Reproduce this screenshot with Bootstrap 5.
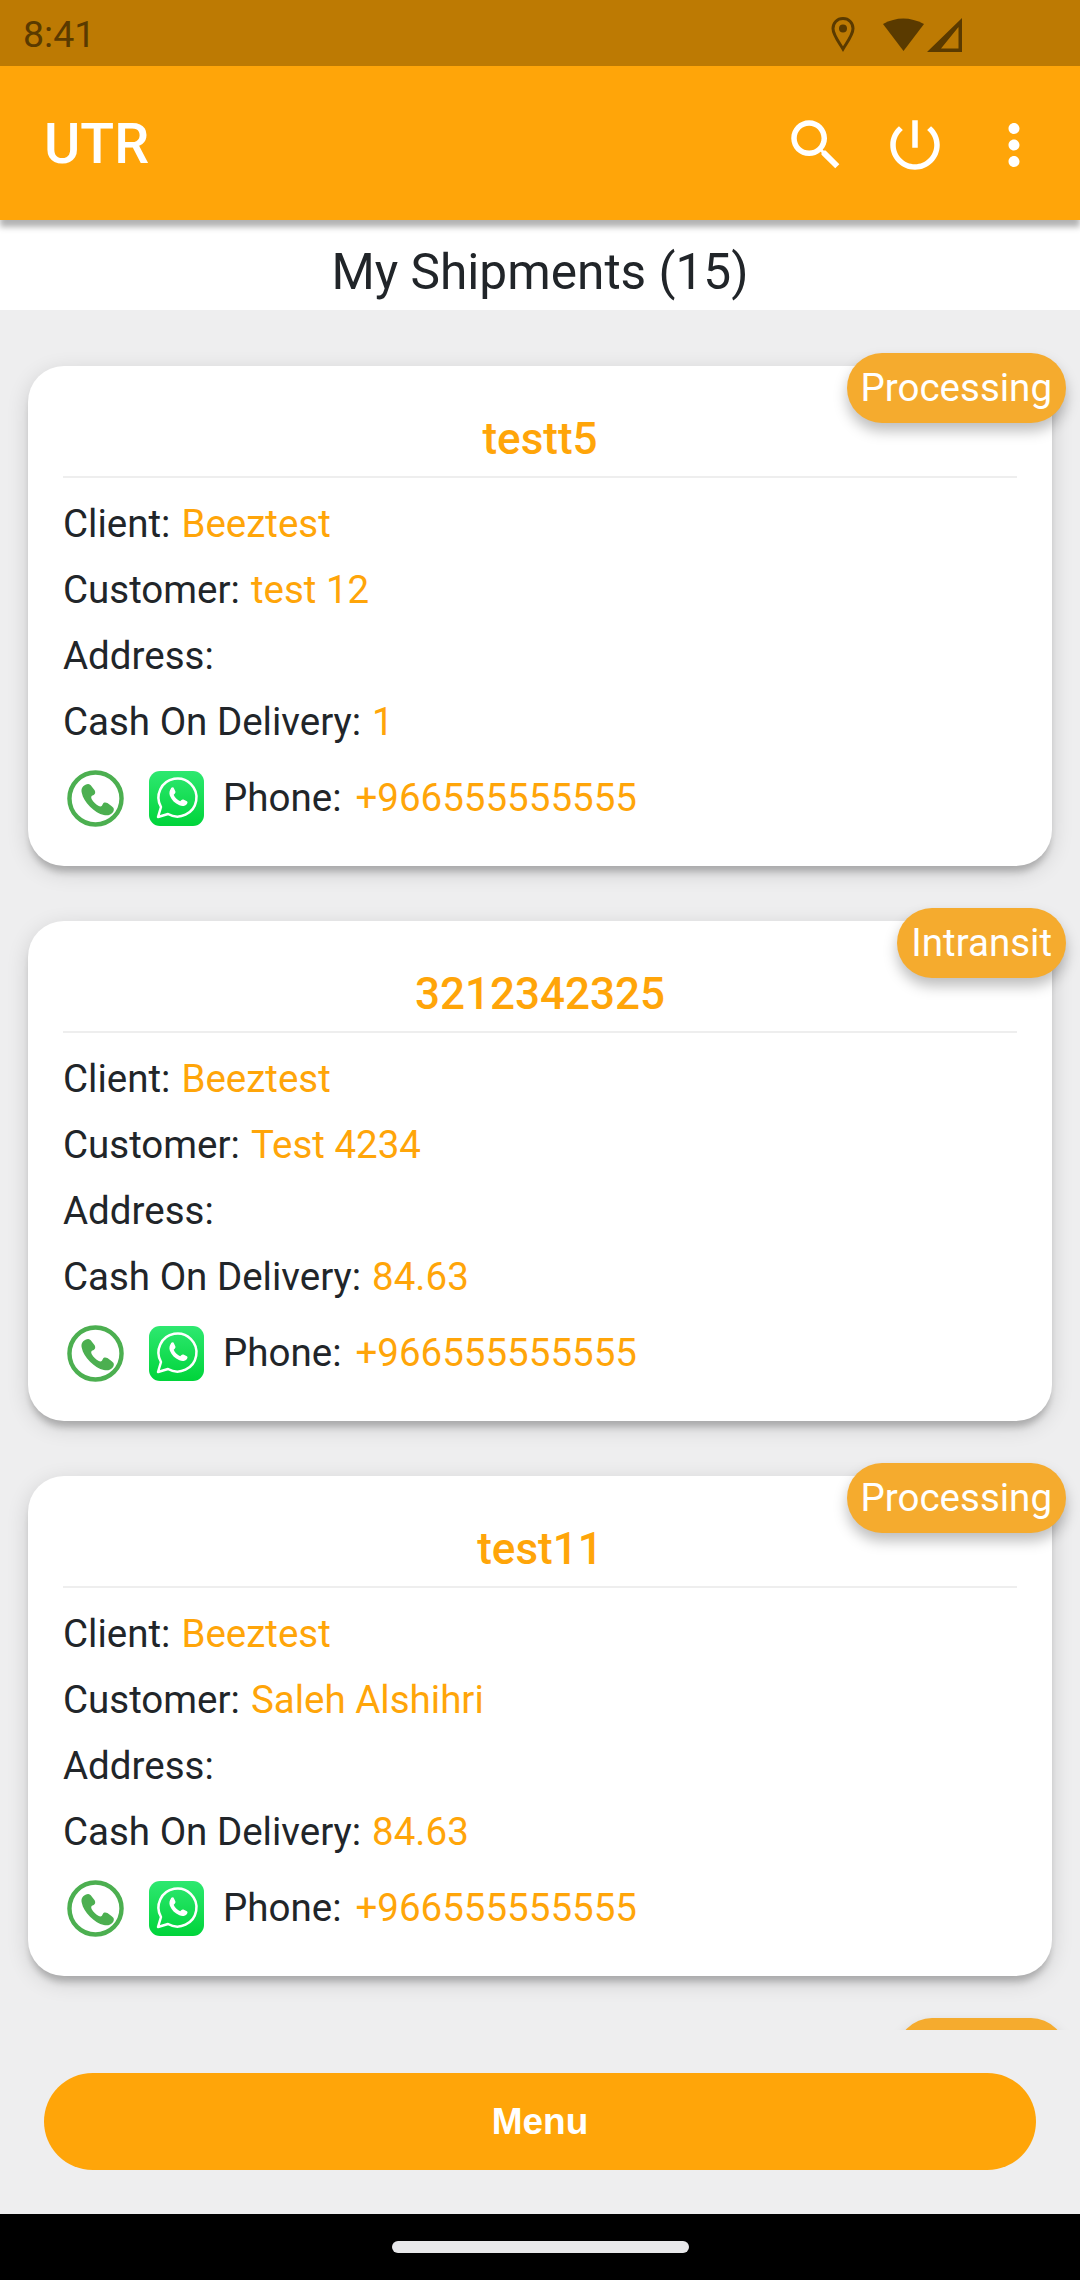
<!DOCTYPE html>
<html lang="en">
<head>
    <meta charset="UTF-8">
    <title>My Shipments - UTR</title>
    <meta name="viewport" content="width=device-width, initial-scale=1">
    <link href="https://cdn.jsdelivr.net/npm/bootstrap@5.3.3/dist/css/bootstrap.min.css" rel="stylesheet">
    <style>
        html, body { height: 100%; }
        body { font-family: Roboto, "Liberation Sans", sans-serif; background: #eeeeef; color: #212529; overflow: hidden; }
        .app-screen { height: 2280px; }
        .status-strip { height: 66px; background: #bd7a03; color: #5a3a00; font-size: 37.5px; padding: 2px 118px 0 23px; }
        .app-toolbar { height: 154px; background: #ffa509; color: #fff; padding: 3px 33px 0 44px; box-shadow: 0 7px 6px rgba(0, 0, 0, .3); position: relative; z-index: 2; }
        .app-brand { font-size: 55.5px; font-weight: 500; line-height: 1; }
        .tool-icon { width: 66px; height: 66px; fill: #fff; }
        .page-heading { height: 90px; background: #fff; font-size: 49.6px; line-height: 1; padding-top: 16px; margin: 0; }
        .ship-list { height: 1720px; overflow: hidden; padding: 56px 28px 0; }
        .ship-card { height: 500px; margin-bottom: 55px; border: 0; border-radius: 36px; background: #fff; padding: 46px 35px 0; box-shadow: 0 8px 6px -2px rgba(0, 0, 0, .2), 0 6px 22px rgba(0, 0, 0, .14); }
        .ship-state { position: absolute; top: -13px; right: -14px; height: 70px; padding: 0 14px; background: #f5ab2e; color: #fff; font-size: 38.5px; box-shadow: 0 8px 14px rgba(0, 0, 0, .26); }
        .ship-state-cut { width: 169px; }
        .ship-code { color: #ffa509; font-size: 44px; font-weight: 500; line-height: 54px; margin: 0; }
        .ship-rule { margin: 10px 0 13px; border-top: 2px solid #eeeeee; opacity: 1; }
        .ship-line { height: 66px; font-size: 38.5px; gap: 11px; }
        .ship-val { color: #ffa509; }
        .phone-line { height: 76px; margin-top: 5px; font-size: 38.5px; padding-left: 4px; }
        .call-icon { width: 57px; height: 57px; }
        .wa-icon { width: 55px; height: 55px; margin-left: 25px; margin-right: 19px; }
        .phone-label { margin-right: 14px; }
        .menu-zone { height: 184px; padding: 43px 44px 0; }
        .menu-btn { height: 97px; background: #ffa509; border: 0; color: #fff; font-family: "Liberation Sans", Arial, sans-serif; font-size: 37px; font-weight: 700; }
        .menu-btn:hover { background: #ffa509; color: #fff; }
        .nav-strip { height: 66px; background: #000; }
        .nav-pill { width: 297px; height: 12px; background: #e8e8ea; margin-top: 27px; }
    </style>
</head>
<body>
    <div class="app-screen d-flex flex-column">
        <div class="status-strip d-flex align-items-center justify-content-between flex-shrink-0">
            <span>8:41</span>
            <svg width="131" height="36" viewBox="0 0 131 36">
                <path d="M12 2.500C6 2.500 2 7 2 12.500 2 19 8.500 27 12 33c3.500-6 10-14 10-20.500C22 7 18 2.500 12 2.500z" fill="none" stroke="#5a3a00" stroke-width="3"/>
                <circle cx="12" cy="12.500" r="4" fill="#5a3a00"/>
                <path d="M52 8Q72-3 93 8L72.500 35z" fill="#5a3a00"/>
                <path d="M131 2V36H96z M127.500 11 110 32.500h17.500z" fill="#5a3a00" fill-rule="evenodd"/>
            </svg>
        </div>

        <header class="app-toolbar d-flex align-items-center justify-content-between flex-shrink-0">
            <span class="app-brand">UTR</span>
            <div class="d-flex" style="gap:33px">
                <svg class="tool-icon" viewBox="0 0 24 24"><path d="M15.500 14h-.79l-.28-.27C15.410 12.590 16 11.110 16 9.500 16 5.910 13.090 3 9.500 3S3 5.910 3 9.500 5.910 16 9.500 16c1.610 0 3.090-.59 4.230-1.570l.27.28v.79l5 4.990L20.490 19l-4.990-5zm-6 0C7.010 14 5 11.990 5 9.500S7.010 5 9.500 5 14 7.010 14 9.500 11.990 14 9.500 14z"/></svg>
                <svg class="tool-icon" viewBox="0 0 24 24"><path d="M13 3h-2v10h2V3zm4.830 2.170l-1.420 1.420C17.990 7.860 19 9.810 19 12c0 3.870-3.130 7-7 7s-7-3.130-7-7c0-2.190 1.010-4.140 2.580-5.420L6.170 5.170C4.230 6.820 3 9.260 3 12c0 4.970 4.030 9 9 9s9-4.030 9-9c0-2.740-1.230-5.180-3.170-6.830z"/></svg>
                <svg class="tool-icon" viewBox="0 0 24 24"><path d="M12 8c1.100 0 2-.9 2-2s-.9-2-2-2-2 .9-2 2 .9 2 2 2zm0 2c-1.100 0-2 .9-2 2s.9 2 2 2 2-.9 2-2-.9-2-2-2zm0 6c-1.100 0-2 .9-2 2s.9 2 2 2 2-.9 2-2-.9-2-2-2z"/></svg>
            </div>
        </header>

        <h1 class="page-heading d-flex align-items-center justify-content-center fw-normal flex-shrink-0">My Shipments (15)</h1>

        <div class="ship-list flex-shrink-0" id="shipList"></div>

        <div class="menu-zone flex-shrink-0">
            <button type="button" class="btn menu-btn w-100 rounded-pill">Menu</button>
        </div>

        <div class="nav-strip d-flex justify-content-center flex-shrink-0">
            <div class="nav-pill rounded-pill"></div>
        </div>
    </div>

    <svg width="0" height="0" class="position-absolute">
        <defs>
            <linearGradient id="waGreen" x1="0" y1="0" x2="0" y2="1">
                <stop offset="0" stop-color="#2ee870"/>
                <stop offset="1" stop-color="#00d43a"/>
            </linearGradient>
        </defs>
    </svg>

    <script>
        const shipments = [
            { code: 'testt5', state: 'Processing', client: 'Beeztest', customer: 'test 12', cod: '1' },
            { code: '3212342325', state: 'Intransit', client: 'Beeztest', customer: 'Test 4234', cod: '84.63' },
            { code: 'test11', state: 'Processing', client: 'Beeztest', customer: 'Saleh Alshihri', cod: '84.63' }
        ];

        const handsetPath = 'M17 13c3-2 5-1 7 2l3 4c1 2 1 4-1 5l-2 1c-1 1-1 2 0 4 2 3 4 5 7 7 2 1 3 1 4 0l1-2c1-2 3-2 5-1l4 3c3 2 4 4 2 7-2 3-6 4-10 3-5-1-10-4-15-9-5-5-8-10-9-15-1-4 0-7 4-9z';

        const cards = shipments.map(s => `
            <div class="card ship-card position-relative">
                <span class="ship-state rounded-pill d-flex align-items-center">${s.state}</span>
                <h2 class="ship-code text-center">${s.code}</h2>
                <hr class="ship-rule">
                <div class="ship-line d-flex align-items-center"><span>Client:</span><span class="ship-val">${s.client}</span></div>
                <div class="ship-line d-flex align-items-center"><span>Customer:</span><span class="ship-val">${s.customer}</span></div>
                <div class="ship-line d-flex align-items-center"><span>Address:</span></div>
                <div class="ship-line d-flex align-items-center"><span>Cash On Delivery:</span><span class="ship-val">${s.cod}</span></div>
                <div class="phone-line d-flex align-items-center">
                    <svg class="call-icon" viewBox="0 0 58 58">
                        <circle cx="29" cy="29" r="26.500" fill="none" stroke="#4caf50" stroke-width="4.500"/>
                        <path d="${handsetPath}" fill="#4caf50" transform="translate(3 3) scale(.93)"/>
                    </svg>
                    <svg class="wa-icon" viewBox="0 0 55 55">
                        <rect width="55" height="55" rx="11" fill="url(#waGreen)"/>
                        <path d="M9 46l3-10A19 19 0 1 1 19 43z" fill="none" stroke="#fff" stroke-width="2.500" stroke-linejoin="round"/>
                        <path d="M22 17c1.500-1 2.500-1 3 .5l1.200 2.500c.5 1 .3 1.800-.5 2.700l-1 1c1 2.800 3.500 5.300 6.500 6.500l1-1c.9-.9 1.800-1 2.700-.5l2.500 1.200c1.400.8 1.400 1.700.5 3-1.800 2.200-4.500 2.600-7.500 1.300-4.500-1.800-7.800-5.200-9.500-9.500-1-2.800-.3-5.200 1.100-7.200z" fill="#fff"/>
                    </svg>
                    <span class="phone-label">Phone:</span>
                    <span class="ship-val">+966555555555</span>
                </div>
            </div>
        `).join('');

        // next card is scrolled off, only the top of its status pill shows
        document.getElementById('shipList').innerHTML = cards + `
            <div class="card ship-card shadow-none position-relative">
                <span class="ship-state ship-state-cut rounded-pill"></span>
            </div>
        `;
    </script>

    <script src="https://cdn.jsdelivr.net/npm/bootstrap@5.3.3/dist/js/bootstrap.bundle.min.js"></script>
</body>
</html>
